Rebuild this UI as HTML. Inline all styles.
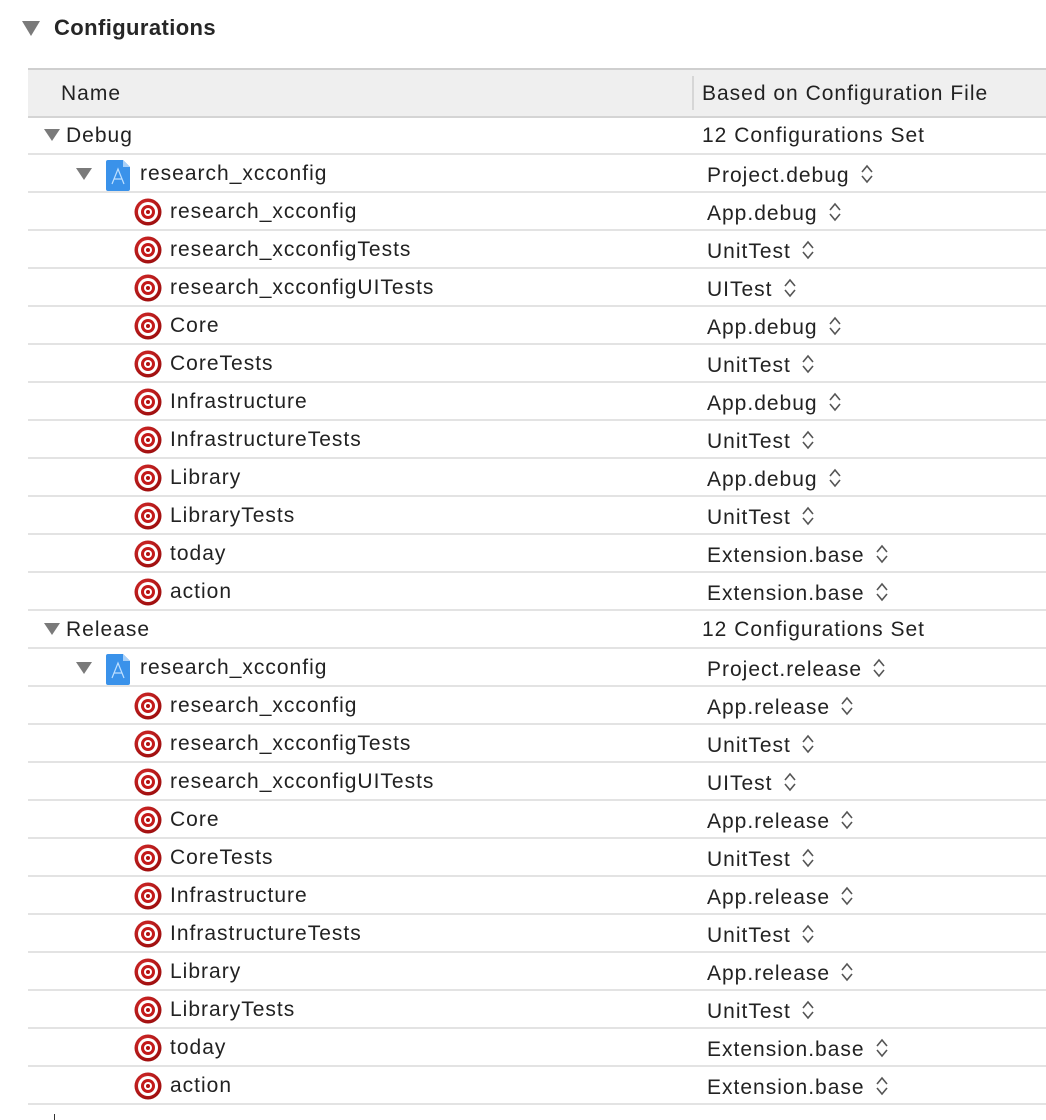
<!DOCTYPE html>
<html><head><meta charset="utf-8">
<style>
*{margin:0;padding:0;box-sizing:border-box}
body{width:1046px;height:1120px;background:#fff;font-family:"Liberation Sans",sans-serif;color:#222;position:relative;overflow:hidden}
.title{position:absolute;left:54px;top:15px;font-size:22px;font-weight:bold;color:#262626;letter-spacing:0.4px}
.tri{position:absolute;width:0;height:0;border-left:8px solid transparent;border-right:8px solid transparent;border-top:13px solid #7a7a7a}
.hdr{position:absolute;left:28px;top:68px;width:1018px;height:50px;background:#efefef;border-top:2px solid #cfcfcf;border-bottom:2px solid #d4d4d4}
.hdr span{position:absolute;top:12px;font-size:21px;color:#222;letter-spacing:1px}
.hdr .div{position:absolute;left:664px;top:6px;width:2px;height:34px;background:#d6d6d6}
.row{position:absolute;left:28px;width:1018px;height:38px;border-bottom:2px solid #e3e3e3;font-size:21px;letter-spacing:1px}
.row .n{position:absolute;top:7px}
.row .v{position:absolute;top:9px;left:679px}
.row .g{position:absolute;top:7px;left:674px}
.chev{display:inline-block;vertical-align:middle;margin-left:10px;margin-top:-4px}
.tg{position:absolute;left:106px;top:5px}
.doc{position:absolute;left:77px;top:5px}
</style></head><body>
<svg width="0" height="0" style="position:absolute">
<defs>
<radialGradient id="rg" cx="40%" cy="35%" r="70%"><stop offset="0" stop-color="#e03030"/><stop offset="1" stop-color="#9a0c0c"/></radialGradient>
<symbol id="t" viewBox="0 0 28 28"><circle cx="14" cy="14" r="13.5" fill="url(#rg)"/><circle cx="14" cy="14" r="10" fill="#fff"/><circle cx="14" cy="14" r="7" fill="#c41a1a"/><circle cx="14" cy="14" r="4" fill="#fff"/><circle cx="14" cy="14" r="2" fill="#b01010"/></symbol>
<symbol id="c" viewBox="0 0 14 22"><path d="M2 9 L7 3 L12 9 M2 13 L7 19 L12 13" fill="none" stroke="#555" stroke-width="1.6"/></symbol>
<symbol id="d" viewBox="0 0 26 31"><path d="M1 2 Q1 0 3 0 L18 0 L25 7 L25 29 Q25 31 23 31 L3 31 Q1 31 1 29Z" fill="#3a92ea"/><path d="M18 0 L18 7 L25 7Z" fill="#a8d0f8"/><path d="M7 24 L13 9 L19 24 M9 19 L17 19" fill="none" stroke="#bfe0ff" stroke-width="1.2"/></symbol>
</defs></svg>

<div class="tri" style="left:22px;top:21px;border-left-width:9px;border-right-width:9px;border-top-width:15px"></div>
<div class="title">Configurations</div>
<div class="hdr"><span style="left:33px">Name</span><div class="div"></div><span style="left:674px">Based on Configuration File</span></div>

<!-- Debug -->
<div class="row" style="top:117px"><div class="tri" style="left:16px;top:12px;border-top-width:12px"></div><span class="n" style="left:38px">Debug</span><span class="g">12 Configurations Set</span></div>
<div class="row" style="top:155px"><div class="tri" style="left:48px;top:13px;border-top-width:12px"></div><svg class="doc" width="26" height="31"><use href="#d"/></svg><span class="n" style="left:112px">research_xcconfig</span><span class="v">Project.debug<svg class="chev" width="14" height="22"><use href="#c"/></svg></span></div>
<div class="row" style="top:193px"><svg class="tg" width="28" height="28"><use href="#t"/></svg><span class="n" style="left:142px">research_xcconfig</span><span class="v">App.debug<svg class="chev" width="14" height="22"><use href="#c"/></svg></span></div>
<div class="row" style="top:231px"><svg class="tg" width="28" height="28"><use href="#t"/></svg><span class="n" style="left:142px">research_xcconfigTests</span><span class="v">UnitTest<svg class="chev" width="14" height="22"><use href="#c"/></svg></span></div>
<div class="row" style="top:269px"><svg class="tg" width="28" height="28"><use href="#t"/></svg><span class="n" style="left:142px">research_xcconfigUITests</span><span class="v">UITest<svg class="chev" width="14" height="22"><use href="#c"/></svg></span></div>
<div class="row" style="top:307px"><svg class="tg" width="28" height="28"><use href="#t"/></svg><span class="n" style="left:142px">Core</span><span class="v">App.debug<svg class="chev" width="14" height="22"><use href="#c"/></svg></span></div>
<div class="row" style="top:345px"><svg class="tg" width="28" height="28"><use href="#t"/></svg><span class="n" style="left:142px">CoreTests</span><span class="v">UnitTest<svg class="chev" width="14" height="22"><use href="#c"/></svg></span></div>
<div class="row" style="top:383px"><svg class="tg" width="28" height="28"><use href="#t"/></svg><span class="n" style="left:142px">Infrastructure</span><span class="v">App.debug<svg class="chev" width="14" height="22"><use href="#c"/></svg></span></div>
<div class="row" style="top:421px"><svg class="tg" width="28" height="28"><use href="#t"/></svg><span class="n" style="left:142px">InfrastructureTests</span><span class="v">UnitTest<svg class="chev" width="14" height="22"><use href="#c"/></svg></span></div>
<div class="row" style="top:459px"><svg class="tg" width="28" height="28"><use href="#t"/></svg><span class="n" style="left:142px">Library</span><span class="v">App.debug<svg class="chev" width="14" height="22"><use href="#c"/></svg></span></div>
<div class="row" style="top:497px"><svg class="tg" width="28" height="28"><use href="#t"/></svg><span class="n" style="left:142px">LibraryTests</span><span class="v">UnitTest<svg class="chev" width="14" height="22"><use href="#c"/></svg></span></div>
<div class="row" style="top:535px"><svg class="tg" width="28" height="28"><use href="#t"/></svg><span class="n" style="left:142px">today</span><span class="v">Extension.base<svg class="chev" width="14" height="22"><use href="#c"/></svg></span></div>
<div class="row" style="top:573px"><svg class="tg" width="28" height="28"><use href="#t"/></svg><span class="n" style="left:142px">action</span><span class="v">Extension.base<svg class="chev" width="14" height="22"><use href="#c"/></svg></span></div>

<!-- Release -->
<div class="row" style="top:611px"><div class="tri" style="left:16px;top:12px;border-top-width:12px"></div><span class="n" style="left:38px">Release</span><span class="g">12 Configurations Set</span></div>
<div class="row" style="top:649px"><div class="tri" style="left:48px;top:13px;border-top-width:12px"></div><svg class="doc" width="26" height="31"><use href="#d"/></svg><span class="n" style="left:112px">research_xcconfig</span><span class="v">Project.release<svg class="chev" width="14" height="22"><use href="#c"/></svg></span></div>
<div class="row" style="top:687px"><svg class="tg" width="28" height="28"><use href="#t"/></svg><span class="n" style="left:142px">research_xcconfig</span><span class="v">App.release<svg class="chev" width="14" height="22"><use href="#c"/></svg></span></div>
<div class="row" style="top:725px"><svg class="tg" width="28" height="28"><use href="#t"/></svg><span class="n" style="left:142px">research_xcconfigTests</span><span class="v">UnitTest<svg class="chev" width="14" height="22"><use href="#c"/></svg></span></div>
<div class="row" style="top:763px"><svg class="tg" width="28" height="28"><use href="#t"/></svg><span class="n" style="left:142px">research_xcconfigUITests</span><span class="v">UITest<svg class="chev" width="14" height="22"><use href="#c"/></svg></span></div>
<div class="row" style="top:801px"><svg class="tg" width="28" height="28"><use href="#t"/></svg><span class="n" style="left:142px">Core</span><span class="v">App.release<svg class="chev" width="14" height="22"><use href="#c"/></svg></span></div>
<div class="row" style="top:839px"><svg class="tg" width="28" height="28"><use href="#t"/></svg><span class="n" style="left:142px">CoreTests</span><span class="v">UnitTest<svg class="chev" width="14" height="22"><use href="#c"/></svg></span></div>
<div class="row" style="top:877px"><svg class="tg" width="28" height="28"><use href="#t"/></svg><span class="n" style="left:142px">Infrastructure</span><span class="v">App.release<svg class="chev" width="14" height="22"><use href="#c"/></svg></span></div>
<div class="row" style="top:915px"><svg class="tg" width="28" height="28"><use href="#t"/></svg><span class="n" style="left:142px">InfrastructureTests</span><span class="v">UnitTest<svg class="chev" width="14" height="22"><use href="#c"/></svg></span></div>
<div class="row" style="top:953px"><svg class="tg" width="28" height="28"><use href="#t"/></svg><span class="n" style="left:142px">Library</span><span class="v">App.release<svg class="chev" width="14" height="22"><use href="#c"/></svg></span></div>
<div class="row" style="top:991px"><svg class="tg" width="28" height="28"><use href="#t"/></svg><span class="n" style="left:142px">LibraryTests</span><span class="v">UnitTest<svg class="chev" width="14" height="22"><use href="#c"/></svg></span></div>
<div class="row" style="top:1029px"><svg class="tg" width="28" height="28"><use href="#t"/></svg><span class="n" style="left:142px">today</span><span class="v">Extension.base<svg class="chev" width="14" height="22"><use href="#c"/></svg></span></div>
<div class="row" style="top:1067px"><svg class="tg" width="28" height="28"><use href="#t"/></svg><span class="n" style="left:142px">action</span><span class="v">Extension.base<svg class="chev" width="14" height="22"><use href="#c"/></svg></span></div>
<div style="position:absolute;left:54px;top:1114px;width:1px;height:6px;background:#333"></div>
</body></html>
